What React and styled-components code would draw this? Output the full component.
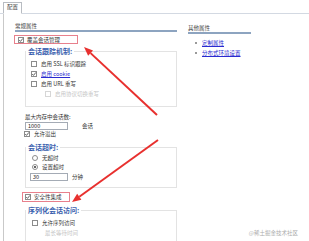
import React from 'react';
import styled, { createGlobalStyle } from 'styled-components';

const GlobalStyle = createGlobalStyle`
  html, body {
    margin: 0;
    padding: 0;
    background: #fff;
  }
  body {
    font-family: "Noto Sans CJK SC", "Noto Sans", sans-serif;
    font-size: 5.5px;
    color: #333;
  }
`;

const Page = styled.div`
  position: relative;
  width: 309px;
  height: 241px;
  overflow: hidden;
  background: #fff;
`;

const TabBar = styled.div`
  display: flex;
  align-items: flex-end;
  height: 14px;
  box-sizing: border-box;
  padding-left: 3px;
  border-bottom: 1px solid #d3d9e2;
`;

const Tab = styled.div`
  display: flex;
  align-items: center;
  justify-content: center;
  width: 19px;
  height: 12px;
  box-sizing: border-box;
  margin-bottom: -1px;
  border: 1px solid #b8bcc2;
  border-bottom-color: #fff;
  background: #fff;
  line-height: 1;
  color: #444;
`;

const Panel = styled.div`
  display: flex;
  gap: 11px;
  height: 227px;
  margin-left: 3px;
  padding-left: 11px;
  border-left: 1px solid #c9c9c9;
`;

const LeftCol = styled.div`
  display: flex;
  flex-direction: column;
  width: 162px;
  flex: none;
`;

const RightCol = styled.div`
  display: flex;
  flex-direction: column;
  width: 63px;
  flex: none;
`;

const SectionTitle = styled.div`
  margin-top: ${p => p.$top}px;
  line-height: 7px;
  color: #444;
  border-bottom: 2px solid #8da4c0;
`;

const Highlight = styled.div`
  display: flex;
  align-items: center;
  gap: 3px;
  box-sizing: border-box;
  width: ${p => p.$w}px;
  height: ${p => p.$h}px;
  margin: ${p => p.$top}px 0 0 ${p => p.$left}px;
  padding-left: ${p => p.$pad}px;
  border: 1px solid #e8808c;
`;

const Box = styled.span`
  position: relative;
  flex: none;
  width: 4px;
  height: 4px;
  border: 1px solid ${p => (p.$disabled ? '#d6d6d6' : '#8c8c8c')};
  background: #fff;

  svg {
    position: absolute;
    left: -1px;
    top: -1px;
  }
`;

const RadioDot = styled.span`
  display: flex;
  align-items: center;
  justify-content: center;
  flex: none;
  width: 4px;
  height: 4px;
  border: 1px solid #8c8c8c;
  border-radius: 50%;
  background: #fff;

  &::after {
    content: '';
    width: 2px;
    height: 2px;
    border-radius: 50%;
    background: ${p => (p.$on ? '#333' : 'transparent')};
  }
`;

const Group = styled.fieldset`
  margin: ${p => p.$top}px 0 0 10px;
  padding: ${p => p.$pt}px 0 ${p => p.$pb}px 5px;
  border: 1px solid #e3e3e3;
  min-inline-size: 0;
`;

const GroupTitle = styled.legend`
  margin-left: -5px;
  padding: 0 2px;
  font-size: 7px;
  line-height: 8px;
  font-weight: 700;
  color: #3b5fae;
`;

const Row = styled.div`
  display: flex;
  align-items: center;
  gap: 4px;
  height: ${p => p.$h || 10}px;
  margin-left: ${p => p.$ml || 0}px;
  padding-left: ${p => p.$indent || 0}px;
  color: ${p => (p.$disabled ? '#c4c4c4' : '#333')};
`;

const Link = styled.a`
  color: #2a2ad0;
  text-decoration: underline;
`;

const FieldLabel = styled.div`
  margin: 6px 0 0 10px;
  line-height: 8px;
`;

const InputRow = styled.div`
  display: flex;
  align-items: center;
  gap: ${p => p.$gap}px;
  margin: ${p => p.$top}px 0 0 ${p => p.$left}px;
`;

const TextInput = styled.div`
  box-sizing: border-box;
  width: ${p => p.$w}px;
  height: 8px;
  padding-left: 2px;
  border: 1px solid #a4abb5;
  line-height: 6px;
  color: #222;
`;

const LinkList = styled.ul`
  margin: 4px 0 0;
  padding: 0 0 0 7px;
  list-style: none;
`;

const LinkItem = styled.li`
  display: flex;
  align-items: center;
  gap: 5px;
  height: 10px;

  &::before {
    content: '';
    width: 2px;
    height: 2px;
    background: #9a9a9a;
  }
`;

const Overlay = styled.svg`
  position: absolute;
  left: 0;
  top: 0;
  pointer-events: none;
`;

const Watermark = styled.div`
  position: absolute;
  right: 11px;
  bottom: 4px;
  color: #ababab;
  font-size: 5.5px;
`;

function Check({ checked, disabled }) {
  return (
    <Box $disabled={disabled}>
      {checked && (
        <svg width="6" height="6" viewBox="0 0 6 6">
          <path d="M1.2 3 L2.5 4.4 L4.9 1.4" fill="none" stroke="#555" strokeWidth="0.9" />
        </svg>
      )}
    </Box>
  );
}

function Arrow({ from, to }) {
  const dx = to[0] - from[0];
  const dy = to[1] - from[1];
  const len = Math.hypot(dx, dy);
  const ux = dx / len;
  const uy = dy / len;
  const bx = to[0] - ux * 9;
  const by = to[1] - uy * 9;
  const px = -uy * 3.6;
  const py = ux * 3.6;
  const head = `${to[0]},${to[1]} ${bx + px},${by + py} ${bx - px},${by - py}`;
  return (
    <g>
      <line x1={from[0]} y1={from[1]} x2={bx} y2={by} stroke="#e8302e" strokeWidth="2" />
      <polygon points={head} fill="#e8302e" />
    </g>
  );
}

export default function App() {
  return (
    <Page>
      <GlobalStyle />
      <TabBar>
        <Tab>配置</Tab>
      </TabBar>
      <Panel>
        <LeftCol>
          <SectionTitle $top={9}>常规属性</SectionTitle>
          <Highlight $w={64} $h={9} $top={3} $left={-1} $pad={3}>
            <Check checked />
            <span>覆盖会话管理</span>
          </Highlight>

          <Group $top={3} $pt={4} $pb={8}>
            <GroupTitle>会话跟踪机制:</GroupTitle>
            <Row><Check /><span>启用 SSL 标识跟踪</span></Row>
            <Row><Check checked /><Link>启用 cookie</Link></Row>
            <Row><Check /><span>启用 URL 重写</span></Row>
            <Row $h={9} $indent={14} $disabled><Check disabled /><span>启用协议切换重写</span></Row>
          </Group>

          <FieldLabel>最大内存中会话数:</FieldLabel>
          <InputRow $top={1} $left={10} $gap={14}>
            <TextInput $w={43}>1000</TextInput>
            <span>会话</span>
          </InputRow>
          <Row $ml={9}><Check checked /><span>允许溢出</span></Row>

          <Group $top={5} $pt={2} $pb={6}>
            <GroupTitle>会话超时:</GroupTitle>
            <Row $h={9} $indent={1}><RadioDot /><span>无超时</span></Row>
            <Row $h={9} $indent={1}><RadioDot $on /><span>设置超时</span></Row>
            <InputRow $top={2} $left={-1} $gap={4}>
              <TextInput $w={38}>30</TextInput>
              <span>分钟</span>
            </InputRow>
          </Group>

          <Highlight $w={48} $h={12} $top={4} $left={7} $pad={2}>
            <Check checked />
            <span>安全性集成</span>
          </Highlight>

          <Group $top={4} $pt={4} $pb={6}>
            <GroupTitle>序列化会话访问:</GroupTitle>
            <Row $indent={1}><Check /><span>允许序列访问</span></Row>
            <Row $indent={14} $disabled><span>最长等待时间</span></Row>
          </Group>
        </LeftCol>

        <RightCol>
          <SectionTitle $top={11}>其他属性</SectionTitle>
          <LinkList>
            <LinkItem><Link>定制属性</Link></LinkItem>
            <LinkItem><Link>分布式环境设置</Link></LinkItem>
          </LinkList>
        </RightCol>
      </Panel>

      <Overlay width="309" height="241" viewBox="0 0 309 241">
        <Arrow from={[157, 115]} to={[84, 47]} />
        <Arrow from={[158, 140]} to={[72, 202]} />
      </Overlay>
      <Watermark>@稀土掘金技术社区</Watermark>
    </Page>
  );
}
